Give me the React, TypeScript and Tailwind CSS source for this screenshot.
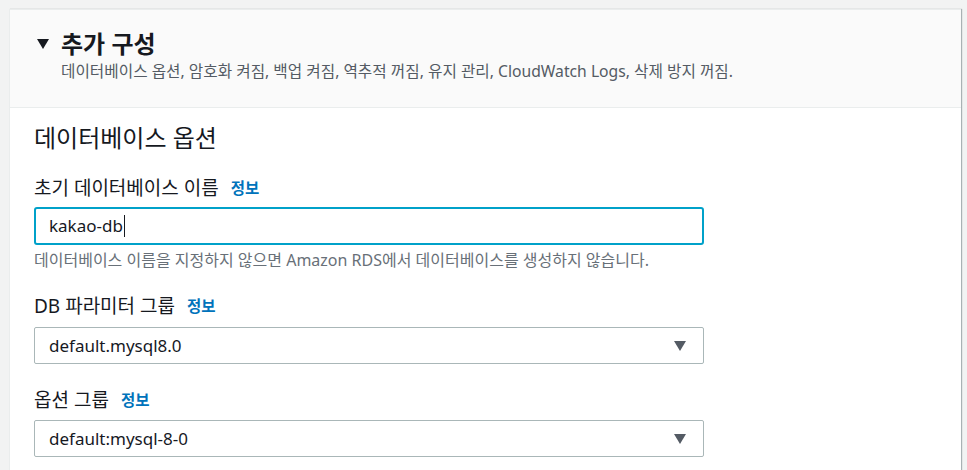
const font = { fontFamily: '"Noto Sans", "Noto Sans CJK KR", sans-serif' };

function Caret({ className }: { className: string }) {
  return (
    <svg viewBox="0 0 12 10" className={className} aria-hidden>
      <path d="M0 0h12L6 10z" fill="currentColor" />
    </svg>
  );
}

function Label({ text }: { text: string }) {
  return (
    <div className="flex h-[24px] items-center gap-[12px] text-[19px] leading-[24px] text-[#16191f]">
      <span>{text}</span>
      <a className="text-[15.5px] font-bold text-[#0073bb]">정보</a>
    </div>
  );
}

function Select({ value }: { value: string }) {
  return (
    <div className="flex h-[37px] w-[670px] items-center justify-between rounded-[2px] border border-[#aab7b8] bg-white pl-[14px] pr-[17px] text-[17px] text-[#16191f]">
      <span>{value}</span>
      <Caret className="h-[10px] w-[12px] text-[#545b64]" />
    </div>
  );
}

export default function App() {
  return (
    <div className="min-h-[470px] bg-[#f2f3f3] pl-[9px] pt-[9px]" style={font}>
      <div className="h-[470px] w-[952px] border-l border-t border-[#eaeded] bg-white shadow-[1px_0_1px_rgba(0,28,36,0.3)]">
        <div className="h-[98px] border-b border-[#eaeded] bg-[#fafafa] pl-[27px] pt-[19px]">
          <div className="flex h-[30px] items-center gap-[12px]">
            <Caret className="h-[10px] w-[12px] text-[#16191f]" />
            <h2 className="text-[24px] font-bold leading-[30px] text-[#16191f]">추가 구성</h2>
          </div>
          <p className="mt-[2px] pl-[24px] text-[15.7px] leading-[20px] text-[#545b64]">
            데이터베이스 옵션, 암호화 켜짐, 백업 켜짐, 역추적 꺼짐, 유지 관리, CloudWatch Logs, 삭제 방지 꺼짐.
          </p>
        </div>

        <div className="pl-[24px] pt-[14px]">
          <h3 className="text-[24px] leading-[32px] text-[#16191f]">데이터베이스 옵션</h3>

          <div className="mt-[22px]">
            <Label text="초기 데이터베이스 이름" />
            <div className="mt-[7px] flex h-[38px] w-[670px] items-center rounded-[3px] border-2 border-[#00a1c9] bg-white pl-[13px] text-[17px] text-[#16191f]">
              kakao-db<span className="ml-[1px] h-[22px] w-px bg-[#16191f]" />
            </div>
            <p className="mt-[4px] text-[16px] leading-[22px] text-[#687078]">
              데이터베이스 이름을 지정하지 않으면 Amazon RDS에서 데이터베이스를 생성하지 않습니다.
            </p>
          </div>

          <div className="mt-[23px]">
            <Label text="DB 파라미터 그룹" />
            <div className="mt-[9px]">
              <Select value="default.mysql8.0" />
            </div>
          </div>

          <div className="mt-[24px]">
            <Label text="옵션 그룹" />
            <div className="mt-[8px]">
              <Select value="default:mysql-8-0" />
            </div>
          </div>
        </div>
      </div>
    </div>
  );
}
